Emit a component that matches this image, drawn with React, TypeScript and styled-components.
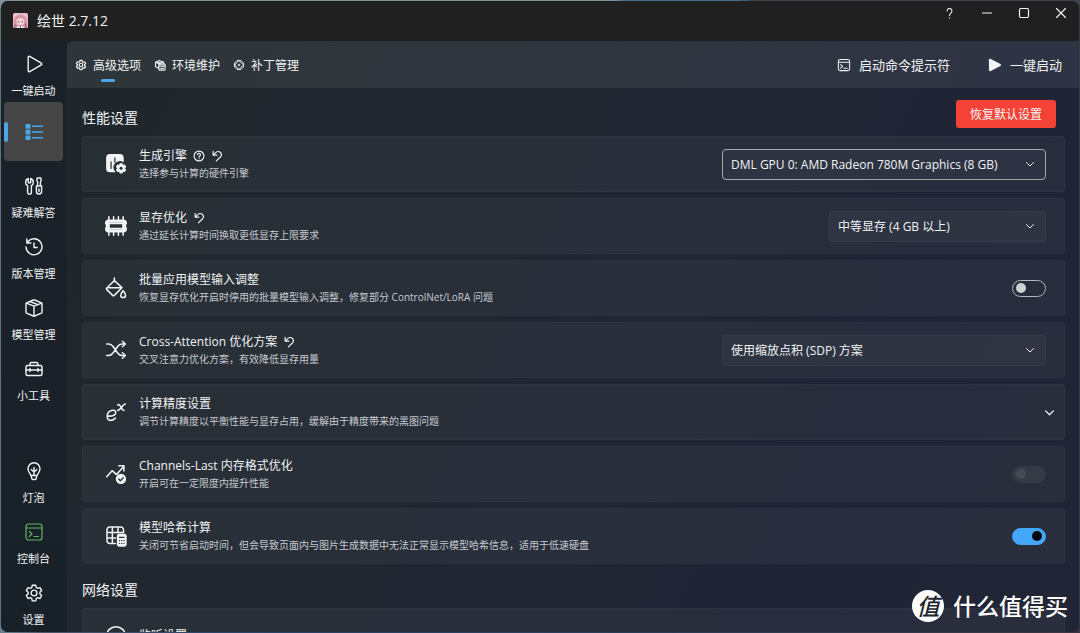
import React, { useId, useState } from "react";
import styled, { createGlobalStyle, css } from "styled-components";

const Global = createGlobalStyle`
  *, *::before, *::after { box-sizing: border-box; }
  body {
    margin: 0;
    overflow: hidden;
    font-family: "Open Sans", "Noto Sans CJK SC", sans-serif;
    font-size: 12px;
    color: #f1f3f5;
  }
  button, select { font: inherit; color: inherit; }
  h1, h2, h3, p, ul { margin: 0; padding: 0; font-weight: 400; }
`;

/* ---------- icons ---------- */

const Svg = styled.svg<{ $size: number }>`
  flex: none;
  display: block;
  width: ${(p) => p.$size}px;
  height: ${(p) => p.$size}px;
  fill: none;
  stroke: currentColor;
  stroke-linecap: round;
  stroke-linejoin: round;
`;

type IconProps = { size?: number; weight?: number };

const icon = (body: React.ReactNode, base = 20, w = 1.4) =>
  function Icon({ size = base, weight = w }: IconProps) {
    return (
      <Svg $size={size} viewBox="0 0 20 20" strokeWidth={weight} aria-hidden="true">
        {body}
      </Svg>
    );
  };

const gearOutline =
  "M8.3 2.2h3.4l.5 2.3 1.5.9 2.3-.8 1.7 3-1.8 1.6v1.7l1.8 1.6-1.7 3-2.3-.8-1.5.9-.5 2.3H8.3l-.5-2.3-1.5-.9-2.3.8-1.7-3 1.8-1.6V9.200l-1.800-1.600 1.700-3 2.300.8 1.500-.9z";

const PlayIcon = icon(<path d="M4.200 3.300v13.400c0 .8.8 1.200 1.500.9l11.600-6.700c.7-.4.7-1.400 0-1.800L5.700 2.400c-.7-.3-1.500.1-1.500.9z" />);
const PlayFilledIcon = icon(
  <path fill="currentColor" d="M2 2.400v15.200c0 .6.7 1 1.200.7l14.600-7.600c.5-.3.5-1.100 0-1.400L3.200 1.700C2.700 1.400 2 1.800 2 2.400z" />,
);
const ListIcon = icon(
  <>
    <g fill="currentColor" stroke="none">
      <rect x="1.500" y="2" width="5" height="4.700" rx=".8" />
      <rect x="1.500" y="7.700" width="5" height="4.700" rx=".8" />
      <rect x="1.500" y="13.400" width="5" height="4.700" rx=".8" />
    </g>
    <path d="M8.500 4.300h10M8.500 10h10M8.500 15.700h10" />
  </>,
);
const ToolsIcon = icon(
  <>
    <path d="M4.300 2.500v4.200h2.400V2.500c1.700.6 2.600 2 2.600 3.700S8.400 9.100 7.400 9.700v6.600c0 2.500-3.800 2.500-3.800 0V9.700C2.400 9 1.600 7.800 1.600 6.200c0-1.700 1.100-3.100 2.700-3.700z" />
    <path d="M13.200 2h3.600l.4 2.400-.8 1.600v4H13.600V6l-.8-1.600zM12.400 10h5.200v5.500c0 3.300-5.200 3.300-5.200 0zM15 13v2.500" />
  </>,
);
const HistoryIcon = icon(
  <>
    <path d="M4 4.500A8 8 0 1 1 2 10M2.800 2v4h4" />
    <path d="M10 6v4.500h3.200" />
  </>,
);
const BoxIcon = icon(
  <>
    <path d="M9.300 2 2.600 4.800c-.4.200-.6.500-.6.900v8.600c0 .4.200.7.600.9L9.300 18c.5.2.900.2 1.400 0l6.700-2.800c.4-.2.6-.5.6-.9V5.700c0-.4-.2-.7-.6-.9L10.700 2a2 2 0 0 0-1.400 0z" />
    <path d="m2.300 5.200 7.700 3 7.700-3M10 8.200v10M6 3.500l7.800 3.200" />
  </>,
);
const ToolboxIcon = icon(
  <>
    <path d="M3.500 6.500h13c.9 0 1.500.6 1.500 1.500v7c0 .9-.6 1.500-1.500 1.500h-13c-.9 0-1.500-.6-1.500-1.500V8c0-.9.6-1.500 1.500-1.500z" />
    <path d="M6 6.500V5c0-.8.7-1.500 1.500-1.500h5c.8 0 1.500.7 1.500 1.500v1.500M2 11h4m8 0h4M6 11h8M6 9.500v3M14 9.500v3" />
  </>,
);
const BulbIcon = icon(
  <>
    <path d="M7 14.500c-.3-1.400-3-3.300-3-6.800a6 6 0 0 1 12 0c0 3.500-2.700 5.400-3 6.800zM7.200 14.500l.5 2.900c.1.700.6 1.100 1.200 1.100h2.200c.6 0 1.100-.4 1.200-1.100l.5-2.900" />
    <path d="M10 14V6.500M7.200 8.500 10 11l2.800-2.500" />
  </>,
);
const ConsoleIcon = icon(
  <>
    <rect x="2" y="2" width="16" height="16" rx="2.600" />
    <path d="M2 6h16M5.200 9.300l2.800 2.600-2.800 2.600M10 14.500h4.500" />
  </>,
);
const GearIcon = icon(
  <>
    <path d={gearOutline} />
    <circle cx="10" cy="10" r="2.900" />
  </>,
);
const BoxSettingsIcon = icon(
  <>
    <path d="M8 15.500 2.500 13V5.500L9 2.500l7 3v2M2.700 5.500 8 8l8-3" />
    <rect x="8" y="8.500" width="10.500" height="10" rx="1" />
    <path d="M8.500 12h9.500M11.500 15.500h4" strokeWidth="2" />
    <path d="M5 4.500 11.500 7" />
  </>,
);
const PatchIcon = icon(
  <>
    <path d="m3 9.500 6.500-6.500a3 3 0 0 1 4 0l3.500 3.500a3 3 0 0 1 0 4L10.500 17a3 3 0 0 1-4 0L3 13.500a3 3 0 0 1 0-4z" />
    <path d="m3 10.500 6.500 6.500a3 3 0 0 0 4 0L17 13.500a3 3 0 0 0 0-4L10.500 3a3 3 0 0 0-4 0L3 6.500a3 3 0 0 0 0 4z" />
    <path d="M10 8.500v3M8.500 10h3" />
  </>,
);
const EngineIcon = icon(
  <>
    <path
      fill="currentColor"
      stroke="none"
      d="M4.500 1h9A3.500 3.500 0 0 1 17 4.500v4.200a5.300 5.300 0 0 0-7.300 8.800H4.500A3.500 3.500 0 0 1 1 14V4.500A3.500 3.500 0 0 1 4.500 1z"
    />
    <path d="M5.500 8v6M9 4.500v4" stroke="#282e34" strokeWidth="1.100" />
    <g transform="translate(9.300 8.600) scale(.53)">
      <path d={gearOutline} fill="currentColor" strokeWidth="2" />
      <circle cx="10" cy="10" r="2.600" fill="#282e34" stroke="none" />
    </g>
  </>,
);
const MemoryIcon = icon(
  <>
    <path
      fill="currentColor"
      stroke="none"
      fillRule="evenodd"
      d="M3 4h14c1.700 0 3 1.300 3 3v.8c0 .5-.8.8-.8 2.200s.8 1.700.8 2.200v.8c0 1.700-1.300 3-3 3H3c-1.700 0-3-1.300-3-3v-.8c0-.5.8-.8.8-2.200S0 8.300 0 7.800V7c0-1.700 1.300-3 3-3zm1 3v6h12V7z"
    />
    <path fill="currentColor" stroke="none" fillRule="evenodd" d="M3 7h14v6H3zm1.300 1.300v3.400h11.400V8.300z" />
    <path d="M3.500 4V1.600M7.800 4V1.600M12.200 4V1.600M16.500 4V1.600M3.500 16v2.400M7.800 16v2.400M12.200 16v2.400M16.500 16v2.400" />
  </>,
);
const BucketIcon = icon(
  <>
    <path d="M8.500 1v3M8.500 3.200 1.700 10c-.5.500-.5 1 0 1.500l5.200 5.200c.5.500 1 .5 1.500 0l7-7zM1.700 9.700h13.500" />
    <path d="M16.500 12.500c1.200 1.700 2.200 2.700 2.200 4a2.200 2.200 0 0 1-4.400 0c0-1.300 1-2.300 2.200-4z" />
  </>,
);
const ShuffleIcon = icon(
  <>
    <path d="M1.500 4.500h1.800c2 0 3 .9 4.200 2.500l3.800 5.500c1.200 1.700 2.300 2.500 4.200 2.500H18M1.500 15h1.800c2 0 3-.9 4.200-2.500L11.300 7c1.200-1.700 2.300-2.500 4.200-2.500H18" />
    <path d="m15.800 2 2.700 2.500L15.800 7M15.800 12.500l2.700 2.500-2.700 2.500" />
  </>,
);
const ExponentIcon = icon(
  <>
    <path d="M2.300 13.700c4.200.3 7.500-.8 7.500-3.200 0-3.600-7.800-2.500-7.800 3.500 0 4.500 5 4.500 7.500 1.500" />
    <path d="M11.500 3.500c3 -1.500 3 5.500 5.800 5M18.500 2.700c-2.500 0-4.500 6-7 5.800" />
  </>,
);
const TrendIcon = icon(
  <>
    <path d="m1.500 12.500 5-5.500 4 3.500L17 3.200M12.500 2.500h4.700v4.700" />
    <circle cx="14.500" cy="14.500" r="4.700" fill="currentColor" stroke="none" />
    <path d="m12.500 14.600 1.500 1.500 2.700-2.800" stroke="#282e34" strokeWidth="1.200" />
  </>,
);
const TableCalcIcon = icon(
  <>
    <path d="M9.500 16.800H4.400a2.600 2.600 0 0 1-2.600-2.600V4.400a2.600 2.600 0 0 1 2.600-2.600h9.800a2.600 2.600 0 0 1 2.600 2.600V7M1.800 6.800h15M1.800 11.800h8M6.700 1.800v15M11.800 1.800V7" />
    <rect x="11.500" y="8.700" width="7.500" height="10.300" rx="1.200" fill="currentColor" />
    <path d="M13.200 11.300h4M13.200 14.200h.1M15.200 14.200h.1M17.200 14.200h.1M13.200 16.700h.1M15.200 16.700h.1M17.200 16.700h.1" stroke="#282e34" strokeWidth="1.200" />
  </>,
);
const ServerIcon = icon(<circle cx="10" cy="10" r="8.500" />);
const HelpIcon = icon(
  <>
    <circle cx="10" cy="10" r="8.200" />
    <path d="M7.600 8a2.400 2.400 0 1 1 3.600 2.100c-.8.500-1.200 1-1.200 1.900M10 14.400v.1" />
  </>,
);
const UndoIcon = icon(<path d="M3.500 2v6.500H10M3.800 8.200 8.300 4c5.500-4.300 11.700 2.300 7.700 7.200L9 18" />);
const ChevronIcon = icon(<path d="m3 7 7 7 7-7" />);
const QuestionIcon = icon(<path d="M5.500 5.500C5.500-.7 14.500-.7 14.500 5.500c0 3.700-4.500 3.700-4.500 8.200M10 17.800v.6" />);
const MinimizeIcon = icon(<path d="M2.500 10h15" />);
const MaximizeIcon = icon(<rect x="2.500" y="2.500" width="15" height="15" rx="2" />);
const CloseIcon = icon(<path d="m2.500 2.500 15 15M17.500 2.500l-15 15" />);

function AppLogo() {
  return (
    <Svg $size={15} viewBox="0 0 15 15" strokeWidth={1} aria-hidden="true">
      <rect width="15" height="15" rx="1.500" fill="#e7b9c4" stroke="none" />
      <path d="M1 15V7C2 1 12 0 14 6v9z" fill="#d795a6" stroke="none" />
      <ellipse cx="7.500" cy="8.500" rx="3.800" ry="3.500" fill="#f4d8d6" stroke="none" />
      <path d="M4 7c1.500 0 2.500-1 3-2 1 1.500 2.500 2 4 2M2 3l2-2M11 1l2 2" stroke="#f5d3dc" />
      <path d="M5.700 8.300v1M9.300 8.300v1" stroke="#8c4a60" />
      <path d="M4 15c.5-3 6.500-3 7 0z" fill="#eef0f4" stroke="none" />
      <path d="M7.500 13v2M12.500 11l.5 3M2 12v2" stroke="#6d5669" />
    </Svg>
  );
}

/* ---------- window frame ---------- */

const Desktop = styled.div`
  position: relative;
  display: flex;
  height: 100vh;
  padding: 1px;
  background:
    linear-gradient(90deg, #80909a 57%, #3f6e91 58%, #3f6e91 68%, #3f434a 70%) top / 100% 8px no-repeat,
    linear-gradient(90deg, #66808e, #4b5568 4%, #2a4468 20%, #2b3b55 60%, #3a3540) bottom / 100% 8px no-repeat,
    linear-gradient(90deg, #5d7480 50%, #363c42 50%);
`;

const Window = styled.div`
  flex: 1;
  display: flex;
  flex-direction: column;
  min-width: 0;
  overflow: hidden;
  border-radius: 7px;
  background: #1b2127;
`;

const TitleBar = styled.header`
  flex: none;
  display: flex;
  align-items: flex-start;
  height: 40px;
  background: #202020;
`;

const Brand = styled.div`
  flex: 1;
  display: flex;
  align-items: center;
  gap: 9px;
  height: 38px;
  padding-left: 12px;
`;

const AppTitle = styled.h1`
  font-size: 14px;
`;

const WindowButton = styled.button`
  display: grid;
  place-items: center;
  width: 37px;
  height: 24px;
  padding: 0;
  border: 0;
  background: none;
`;

const Body = styled.div`
  flex: 1;
  display: flex;
  min-height: 0;
`;

/* ---------- sidebar ---------- */

const Sidebar = styled.nav`
  flex: none;
  display: flex;
  flex-direction: column;
  gap: 2px;
  width: 66px;
  padding: 0 4px 3px 3px;
  background: linear-gradient(#1b2128, #192128);
`;

const NavSpacer = styled.div`
  flex: 1;
`;

const NavButton = styled.button<{ $active?: boolean }>`
  position: relative;
  flex: none;
  display: flex;
  flex-direction: column;
  align-items: center;
  gap: 9px;
  height: 59px;
  padding: 13px 0 0;
  border: 0;
  border-radius: 4px;
  background: none;
  font-size: 11px;
  line-height: 16px;
  white-space: nowrap;

  ${(p) =>
    p.$active &&
    css`
      justify-content: center;
      padding: 0;
      background: #454545;
      color: #4ba6ea;

      &::before {
        content: "";
        position: absolute;
        left: 0;
        top: 20px;
        width: 4px;
        height: 20px;
        border-radius: 2px;
        background: #4ba6ea;
      }
    `}
`;

const Accent = styled.span`
  color: #5fb85f;
`;

/* ---------- main area ---------- */

const Main = styled.main`
  flex: 1;
  display: flex;
  flex-direction: column;
  min-width: 0;
  overflow: hidden;
  border-top-left-radius: 6px;
  background: linear-gradient(115deg, #20272b 0%, #202731 42%, #202536 75%, #212535 100%);
`;

const Toolbar = styled.div`
  flex: none;
  display: flex;
  align-items: stretch;
  height: 47px;
  padding: 0 17px 0 8px;
  background: rgba(255, 255, 255, 0.07);
`;

const Tabs = styled.div`
  flex: 1;
  display: flex;
  gap: 13px;
`;

const Tab = styled.button<{ $active?: boolean }>`
  position: relative;
  display: flex;
  align-items: center;
  gap: 6px;
  padding: 0;
  border: 0;
  background: none;
  white-space: nowrap;

  &::after {
    content: "";
    position: absolute;
    left: calc(50% - 7px);
    bottom: 6px;
    width: 14px;
    height: 3px;
    border-radius: 2px;
    background: ${(p) => (p.$active ? "#4ba6ea" : "transparent")};
  }
`;

const Commands = styled.div`
  display: flex;
  gap: 38px;
`;

const Command = styled.button`
  display: flex;
  align-items: center;
  gap: 8px;
  padding: 0;
  border: 0;
  background: none;
  font-size: 13px;
  white-space: nowrap;
`;

const Page = styled.div`
  flex: 1;
  display: flex;
  flex-direction: column;
  gap: 8px;
  min-height: 0;
  overflow: hidden;
  padding: 12px 14px 0 15px;
`;

const SectionHead = styled.div`
  display: flex;
  align-items: center;
  justify-content: space-between;
  height: 36px;
  padding-right: 9px;
`;

const SectionTitle = styled.h2`
  font-size: 14px;
  line-height: 20px;
`;

const ResetButton = styled.button`
  align-self: flex-start;
  height: 28px;
  padding: 0 14px;
  border: 0;
  border-radius: 3px;
  background: #f44336;
`;

const CardList = styled.ul`
  display: flex;
  flex-direction: column;
  gap: 6px;
  list-style: none;
`;

const Card = styled.li<{ $flush?: boolean }>`
  display: flex;
  align-items: center;
  gap: 12px;
  height: 56px;
  padding: 0 ${(p) => (p.$flush ? 9 : 18)}px 0 22px;
  border: 1px solid rgba(255, 255, 255, 0.03);
  border-radius: 4px;
  background: rgba(255, 255, 255, 0.04);
`;

const CardText = styled.div`
  flex: 1;
  min-width: 0;
  white-space: nowrap;
`;

const CardTitle = styled.h3`
  display: flex;
  align-items: center;
  gap: 6px;
  font-size: 12px;
  line-height: 18px;
`;

const CardNote = styled.p`
  font-size: 10px;
  line-height: 16px;
  color: #c6cacf;
`;

const InlineButton = styled.button`
  display: grid;
  padding: 0;
  border: 0;
  background: none;
`;

/* ---------- controls ---------- */

const SelectBox = styled.div<{ $wide?: boolean; $focused?: boolean }>`
  flex: none;
  display: grid;
  align-items: center;
  width: ${(p) => (p.$wide ? 324 : 217)}px;
  height: 31px;
  border: 1px solid ${(p) => (p.$focused ? "#a3a7ad" : "rgba(255, 255, 255, 0.04)")};
  border-radius: 4px;
  background: rgba(255, 255, 255, ${(p) => (p.$focused ? 0.03 : 0.035)});

  > * { grid-area: 1 / 1; }
  > svg { justify-self: end; margin-right: 10px; pointer-events: none; }
`;

const Select = styled.select`
  appearance: none;
  width: 100%;
  height: 100%;
  padding: 0 30px 0 8px;
  border: 0;
  outline: 0;
  background: transparent;
  font-size: 12px;
`;

const Toggle = styled.input`
  appearance: none;
  flex: none;
  display: flex;
  align-items: center;
  width: 34px;
  height: 17px;
  margin: 0;
  padding: 0 3px;
  border: 1px solid #b4b7bd;
  border-radius: 9px;

  &::before {
    content: "";
    width: 10px;
    height: 10px;
    border-radius: 50%;
    background: #cfd1d5;
  }
  &:checked {
    justify-content: flex-end;
    border-color: #44a8fa;
    background: #44a8fa;
  }
  &:checked::before { background: #05080c; }
  &:disabled {
    border-color: #363a45;
    background: #363a45;
  }
  &:disabled::before { background: #464a55; }
`;

const Watermark = styled.div`
  position: absolute;
  right: 12px;
  bottom: 11px;
  display: flex;
  align-items: center;
  gap: 9px;
  color: #fff;
  font-size: 23px;
  font-weight: 500;
  line-height: 32px;
`;

const Seal = styled.span`
  width: 32px;
  height: 32px;
  border-radius: 50%;
  background: #fff;
  color: #22252e;
  font-style: italic;
  text-align: center;
`;

/* ---------- data ---------- */

type Control =
  | { kind: "select"; value: string; wide?: boolean; focused?: boolean }
  | { kind: "toggle"; on?: boolean; disabled?: boolean }
  | { kind: "expand" };

type Setting = {
  icon: React.ComponentType<IconProps>;
  title: string;
  note: string;
  help?: boolean;
  undo?: boolean;
  control: Control;
};

const performance: Setting[] = [
  {
    icon: EngineIcon, title: "生成引擎", note: "选择参与计算的硬件引擎", help: true, undo: true,
    control: { kind: "select", value: "DML GPU 0: AMD Radeon 780M Graphics (8 GB)", wide: true, focused: true },
  },
  {
    icon: MemoryIcon, title: "显存优化", note: "通过延长计算时间换取更低显存上限要求", undo: true,
    control: { kind: "select", value: "中等显存 (4 GB 以上)" },
  },
  {
    icon: BucketIcon, title: "批量应用模型输入调整",
    note: "恢复显存优化开启时停用的批量模型输入调整，修复部分 ControlNet/LoRA 问题",
    control: { kind: "toggle" },
  },
  {
    icon: ShuffleIcon, title: "Cross-Attention 优化方案", note: "交叉注意力优化方案，有效降低显存用量", undo: true,
    control: { kind: "select", value: "使用缩放点积 (SDP) 方案", wide: true },
  },
  {
    icon: ExponentIcon, title: "计算精度设置",
    note: "调节计算精度以平衡性能与显存占用，缓解由于精度带来的黑图问题",
    control: { kind: "expand" },
  },
  {
    icon: TrendIcon, title: "Channels-Last 内存格式优化", note: "开启可在一定限度内提升性能",
    control: { kind: "toggle", disabled: true },
  },
  {
    icon: TableCalcIcon, title: "模型哈希计算",
    note: "关闭可节省启动时间，但会导致页面内与图片生成数据中无法正常显示模型哈希信息，适用于低速硬盘",
    control: { kind: "toggle", on: true },
  },
];

const network: Setting[] = [
  { icon: ServerIcon, title: "监听设置", note: "", control: { kind: "expand" } },
];

function SettingControl({ control, labelId }: { control: Control; labelId: string }) {
  const [on, setOn] = useState(control.kind === "toggle" && !!control.on);
  if (control.kind === "select") {
    return (
      <SelectBox $wide={control.wide} $focused={control.focused}>
        <Select aria-labelledby={labelId}>
          <option>{control.value}</option>
        </Select>
        <ChevronIcon size={10} weight={2} />
      </SelectBox>
    );
  }
  if (control.kind === "toggle") {
    return (
      <Toggle
        type="checkbox"
        role="switch"
        aria-labelledby={labelId}
        checked={on}
        disabled={control.disabled}
        onChange={(e) => setOn(e.target.checked)}
      />
    );
  }
  return (
    <InlineButton type="button" aria-labelledby={labelId}>
      <ChevronIcon size={11} weight={2.400} />
    </InlineButton>
  );
}

function SettingCard({ setting }: { setting: Setting }) {
  const id = useId();
  const Icon = setting.icon;
  return (
    <Card $flush={setting.control.kind === "expand"}>
      <Icon size={22} />
      <CardText>
        <CardTitle>
          <span id={id}>{setting.title}</span>
          {setting.help && (
            <InlineButton type="button" aria-label="帮助">
              <HelpIcon size={12} weight={1.900} />
            </InlineButton>
          )}
          {setting.undo && (
            <InlineButton type="button" aria-label="还原">
              <UndoIcon size={12} weight={1.900} />
            </InlineButton>
          )}
        </CardTitle>
        <CardNote>{setting.note}</CardNote>
      </CardText>
      <SettingControl control={setting.control} labelId={id} />
    </Card>
  );
}

export default function App() {
  return (
    <Desktop>
      <Global />
      <Window>
        <TitleBar>
          <Brand>
            <AppLogo />
            <AppTitle>绘世 2.7.12</AppTitle>
          </Brand>
          <WindowButton type="button" aria-label="帮助"><QuestionIcon size={11} weight={1.900} /></WindowButton>
          <WindowButton type="button" aria-label="最小化"><MinimizeIcon size={12} weight={2} /></WindowButton>
          <WindowButton type="button" aria-label="最大化"><MaximizeIcon size={12} weight={2} /></WindowButton>
          <WindowButton type="button" aria-label="关闭"><CloseIcon size={12} weight={1.900} /></WindowButton>
        </TitleBar>
        <Body>
          <Sidebar>
            <NavButton type="button"><PlayIcon />一键启动</NavButton>
            <NavButton type="button" $active aria-label="高级选项"><ListIcon /></NavButton>
            <NavButton type="button"><ToolsIcon />疑难解答</NavButton>
            <NavButton type="button"><HistoryIcon />版本管理</NavButton>
            <NavButton type="button"><BoxIcon />模型管理</NavButton>
            <NavButton type="button"><ToolboxIcon />小工具</NavButton>
            <NavSpacer />
            <NavButton type="button"><BulbIcon />灯泡</NavButton>
            <NavButton type="button"><Accent><ConsoleIcon weight={1.200} /></Accent>控制台</NavButton>
            <NavButton type="button"><GearIcon />设置</NavButton>
          </Sidebar>
          <Main>
            <Toolbar>
              <Tabs>
                <Tab type="button" $active><GearIcon size={12} weight={2} />高级选项</Tab>
                <Tab type="button"><BoxSettingsIcon size={12} weight={1.800} />环境维护</Tab>
                <Tab type="button"><PatchIcon size={12} weight={1.600} />补丁管理</Tab>
              </Tabs>
              <Commands>
                <Command type="button"><ConsoleIcon size={14} weight={1.500} />启动命令提示符</Command>
                <Command type="button"><PlayFilledIcon size={14} />一键启动</Command>
              </Commands>
            </Toolbar>
            <Page>
              <section>
                <SectionHead>
                  <SectionTitle>性能设置</SectionTitle>
                  <ResetButton type="button">恢复默认设置</ResetButton>
                </SectionHead>
                <CardList>
                  {performance.map((s) => <SettingCard key={s.title} setting={s} />)}
                </CardList>
              </section>
              <section>
                <SectionHead>
                  <SectionTitle>网络设置</SectionTitle>
                </SectionHead>
                <CardList>
                  {network.map((s) => <SettingCard key={s.title} setting={s} />)}
                </CardList>
              </section>
            </Page>
          </Main>
        </Body>
      </Window>
      <Watermark><Seal>值</Seal>什么值得买</Watermark>
    </Desktop>
  );
}
